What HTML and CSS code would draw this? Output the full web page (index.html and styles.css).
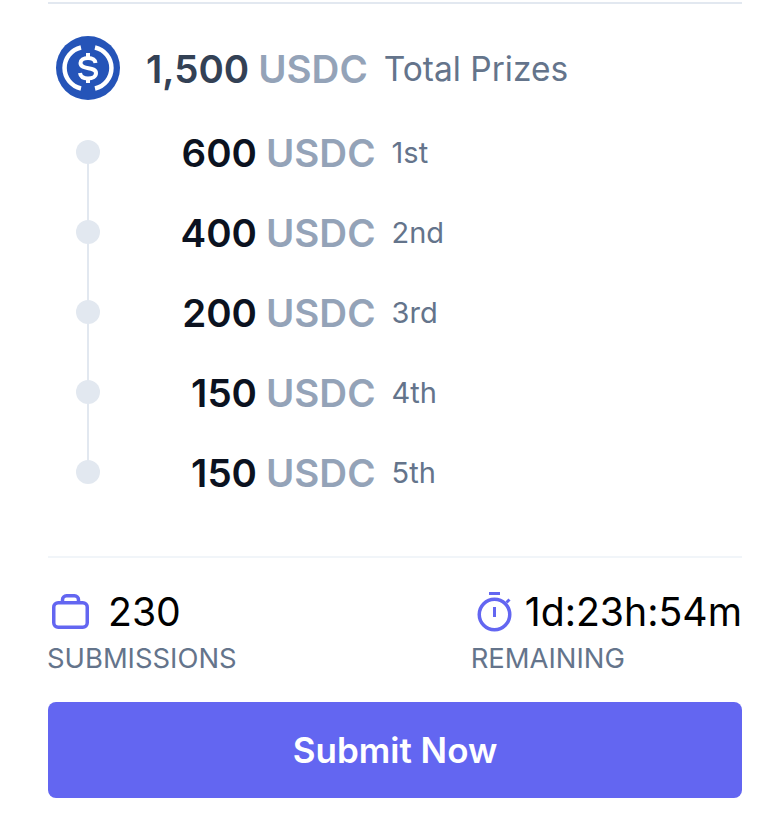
FILE: index.html
```html
<!DOCTYPE html>
<html lang="en">
<head>
    <meta charset="UTF-8">
    <meta name="viewport" content="width=device-width, initial-scale=1.0">
    <title>Bounty Prizes</title>
    <link rel="stylesheet" href="styles.css">
</head>
<body>
    <div class="card">
        <div class="total">
            <svg class="coin" viewBox="0 0 64 64" width="64" height="64">
                <circle cx="32" cy="32" r="32" fill="#2554b8"/>
                <path d="M25 11.500a21 21 0 0 0 0 41" fill="none" stroke="#fff" stroke-width="4.500"/>
                <path d="M39 11.500a21 21 0 0 1 0 41" fill="none" stroke="#fff" stroke-width="4.500"/>
                <path d="M39.500 27c-.5-3.500-3.500-5-7.500-5-4.500 0-7.500 2-7.500 5 0 7.500 15.500 3 15.500 10 0 3.500-3.500 5.500-8 5.500-4.500 0-7.500-2-8-5.500" fill="none" stroke="#fff" stroke-width="4"/>
                <path d="M32 17v5M32 42v5" fill="none" stroke="#fff" stroke-width="4"/>
            </svg>
            <span class="total-amount">1,500</span>
            <span class="total-unit">USDC</span>
            <span class="total-label">Total Prizes</span>
        </div>

        <ul class="prizes">
            <li class="prize"><span class="dot"></span><span class="amount">600</span><span class="unit">USDC</span><span class="rank">1st</span></li>
            <li class="prize"><span class="dot"></span><span class="amount">400</span><span class="unit">USDC</span><span class="rank">2nd</span></li>
            <li class="prize"><span class="dot"></span><span class="amount">200</span><span class="unit">USDC</span><span class="rank">3rd</span></li>
            <li class="prize"><span class="dot"></span><span class="amount">150</span><span class="unit">USDC</span><span class="rank">4th</span></li>
            <li class="prize"><span class="dot"></span><span class="amount">150</span><span class="unit">USDC</span><span class="rank">5th</span></li>
        </ul>

        <div class="stats">
            <div class="stat">
                <div class="stat-value">
                    <svg class="stat-icon bag" viewBox="0 0 37 35" width="37" height="35">
                        <rect x="1.750" y="8.750" width="33.500" height="24.500" rx="4.500" fill="none" stroke="#6366f1" stroke-width="3.500"/>
                        <path d="M10.500 8V5.750a4 4 0 0 1 4-4h8a4 4 0 0 1 4 4V8" fill="none" stroke="#6366f1" stroke-width="3.500"/>
                    </svg>
                    <span>230</span>
                </div>
                <div class="stat-label">SUBMISSIONS</div>
            </div>
            <div class="stat">
                <div class="stat-value timer">
                    <svg class="stat-icon stopwatch" viewBox="0 0 35 40" width="35" height="40">
                        <circle cx="17.500" cy="22.500" r="15.250" fill="none" stroke="#6366f1" stroke-width="3.500"/>
                        <path d="M12 1.500h11" fill="none" stroke="#6366f1" stroke-width="3"/>
                        <path d="M17.500 15v10" fill="none" stroke="#6366f1" stroke-width="3"/>
                        <path d="M29.500 10.500l3-3" fill="none" stroke="#6366f1" stroke-width="3"/>
                    </svg>
                    <span>1d:23h:54m</span>
                </div>
                <div class="stat-label">REMAINING</div>
            </div>
        </div>

        <button class="submit">Submit Now</button>
    </div>
</body>
</html>
```

FILE: styles.css
```css
body {
    margin: 0;
    background-color: #fff;
    font-family: Inter, "Liberation Sans", sans-serif;
}
.card {
    margin: 2px 40px 0 48px;
    border-top: 2px solid #e2e8f0;
}
.total {
    display: flex;
    align-items: center;
    height: 64px;
    margin-top: 32px;
    padding-left: 8px;
}
.coin {
    margin-right: 26px;
}
.total-amount {
    margin-top: 2px;
    font-size: 38.5px;
    font-weight: 600;
    color: #334155;
    margin-right: 9px;
}
.total-unit {
    margin-top: 2px;
    font-size: 38.5px;
    font-weight: 600;
    color: #94a3b8;
    margin-right: 16px;
}
.total-label {
    margin-top: 2px;
    font-size: 33.5px;
    color: #64748b;
}
.prizes {
    list-style: none;
    margin: 12px 0 0;
    padding: 0 0 44px;
    border-bottom: 2px solid #f1f5f9;
}
.prize {
    position: relative;
    display: flex;
    align-items: center;
    height: 80px;
    padding-left: 28px;
}
.prize:not(:last-child)::before {
    content: "";
    position: absolute;
    left: 39px;
    top: 40px;
    width: 2px;
    height: 80px;
    background-color: #e2e8f0;
}
.dot {
    position: relative;
    width: 24px;
    height: 24px;
    border-radius: 50%;
    background-color: #e2e8f0;
}
.amount {
    width: 157px;
    margin-top: 2px;
    margin-right: 9px;
    text-align: right;
    font-size: 38.5px;
    font-weight: 600;
    color: #0b1220;
}
.unit {
    margin-top: 2px;
    margin-right: 16px;
    font-size: 38.5px;
    font-weight: 600;
    color: #94a3b8;
}
.rank {
    font-size: 29px;
    color: #64748b;
}
.stats {
    display: flex;
    justify-content: space-between;
    margin-top: 25px;
}
.stat-value {
    display: flex;
    align-items: center;
    gap: 19px;
    height: 57px;
    font-size: 39.2px;
    color: #000;
}
.stat-value.timer {
    gap: 13px;
}
.stat-icon {
    flex: none;
}
.stat-icon.bag {
    margin-left: 4px;
}
.stat-icon.stopwatch {
    margin-left: 5px;
}
.stat-label {
    margin-left: -1px;
    font-size: 27.400px;
    color: #64748b;
    line-height: 36px;
}
.submit {
    display: block;
    width: 100%;
    height: 96px;
    margin-top: 26px;
    border: none;
    border-radius: 8px;
    background-color: #6366f1;
    color: #fff;
    font-family: inherit;
    font-size: 35px;
    font-weight: 600;
    cursor: pointer;
}
```
